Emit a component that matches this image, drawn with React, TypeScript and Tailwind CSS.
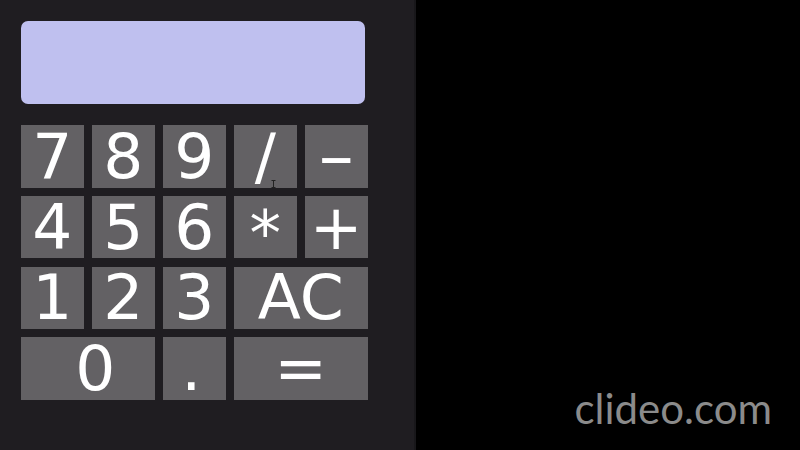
import React from "react";

type Key = { label: string; span?: number; cls?: string; inner?: string };

const keys: Key[] = [
  { label: "7" }, { label: "8" }, { label: "9" }, { label: "/" }, { label: "–", cls: "text-[70px]" },
  { label: "4" }, { label: "5" }, { label: "6" }, { label: "*", inner: "translate-y-[6px]" }, { label: "+" },
  { label: "1" }, { label: "2" }, { label: "3" }, { label: "AC", span: 2 },
  { label: "0", span: 2, cls: "pl-[15px]" }, { label: ".", cls: "pr-[6px]" }, { label: "=", span: 2 },
];

export default function App() {
  return (
    <div className="w-[800px] h-[450px] bg-black flex overflow-hidden">
      <div className="relative w-[416px] h-full bg-[#1f1d21] border-r-2 border-[#18171a] pt-[21px] pl-[21px]">
        <div className="w-[344px] h-[83px] rounded-[7px] bg-[#bfc0ef]" />
        <div
          className="mt-[21px] grid grid-cols-[repeat(5,62.5px)] auto-rows-[62.5px] gap-x-[8.5px] gap-y-[8.3px] text-white"
          style={{ fontFamily: '"DejaVu Sans", sans-serif' }}
        >
          {keys.map((k, i) => (
            <div
              key={i}
              className={`${k.span === 2 ? "col-span-2" : ""} ${k.cls ?? ""} bg-[#636164] flex items-center justify-center text-[63px] leading-none`}
            >
              <span className={`block ${k.inner ?? ""}`}>{k.label}</span>
            </div>
          ))}
        </div>
        <svg className="absolute left-[271px] top-[180px]" width="5" height="8" viewBox="0 0 5 8">
          <path d="M0.5 0.5h4M2.5 0.5v7M0.5 7.5h4" stroke="#222" strokeWidth="1" fill="none" />
        </svg>
      </div>
      <div className="flex-1 flex items-end justify-end pr-[28px] pb-[21px]">
        <span
          className="text-[#8b8b8b] text-[42px] leading-none"
          style={{ fontFamily: 'Lato, sans-serif' }}
        >
          clideo.com
        </span>
      </div>
    </div>
  );
}
